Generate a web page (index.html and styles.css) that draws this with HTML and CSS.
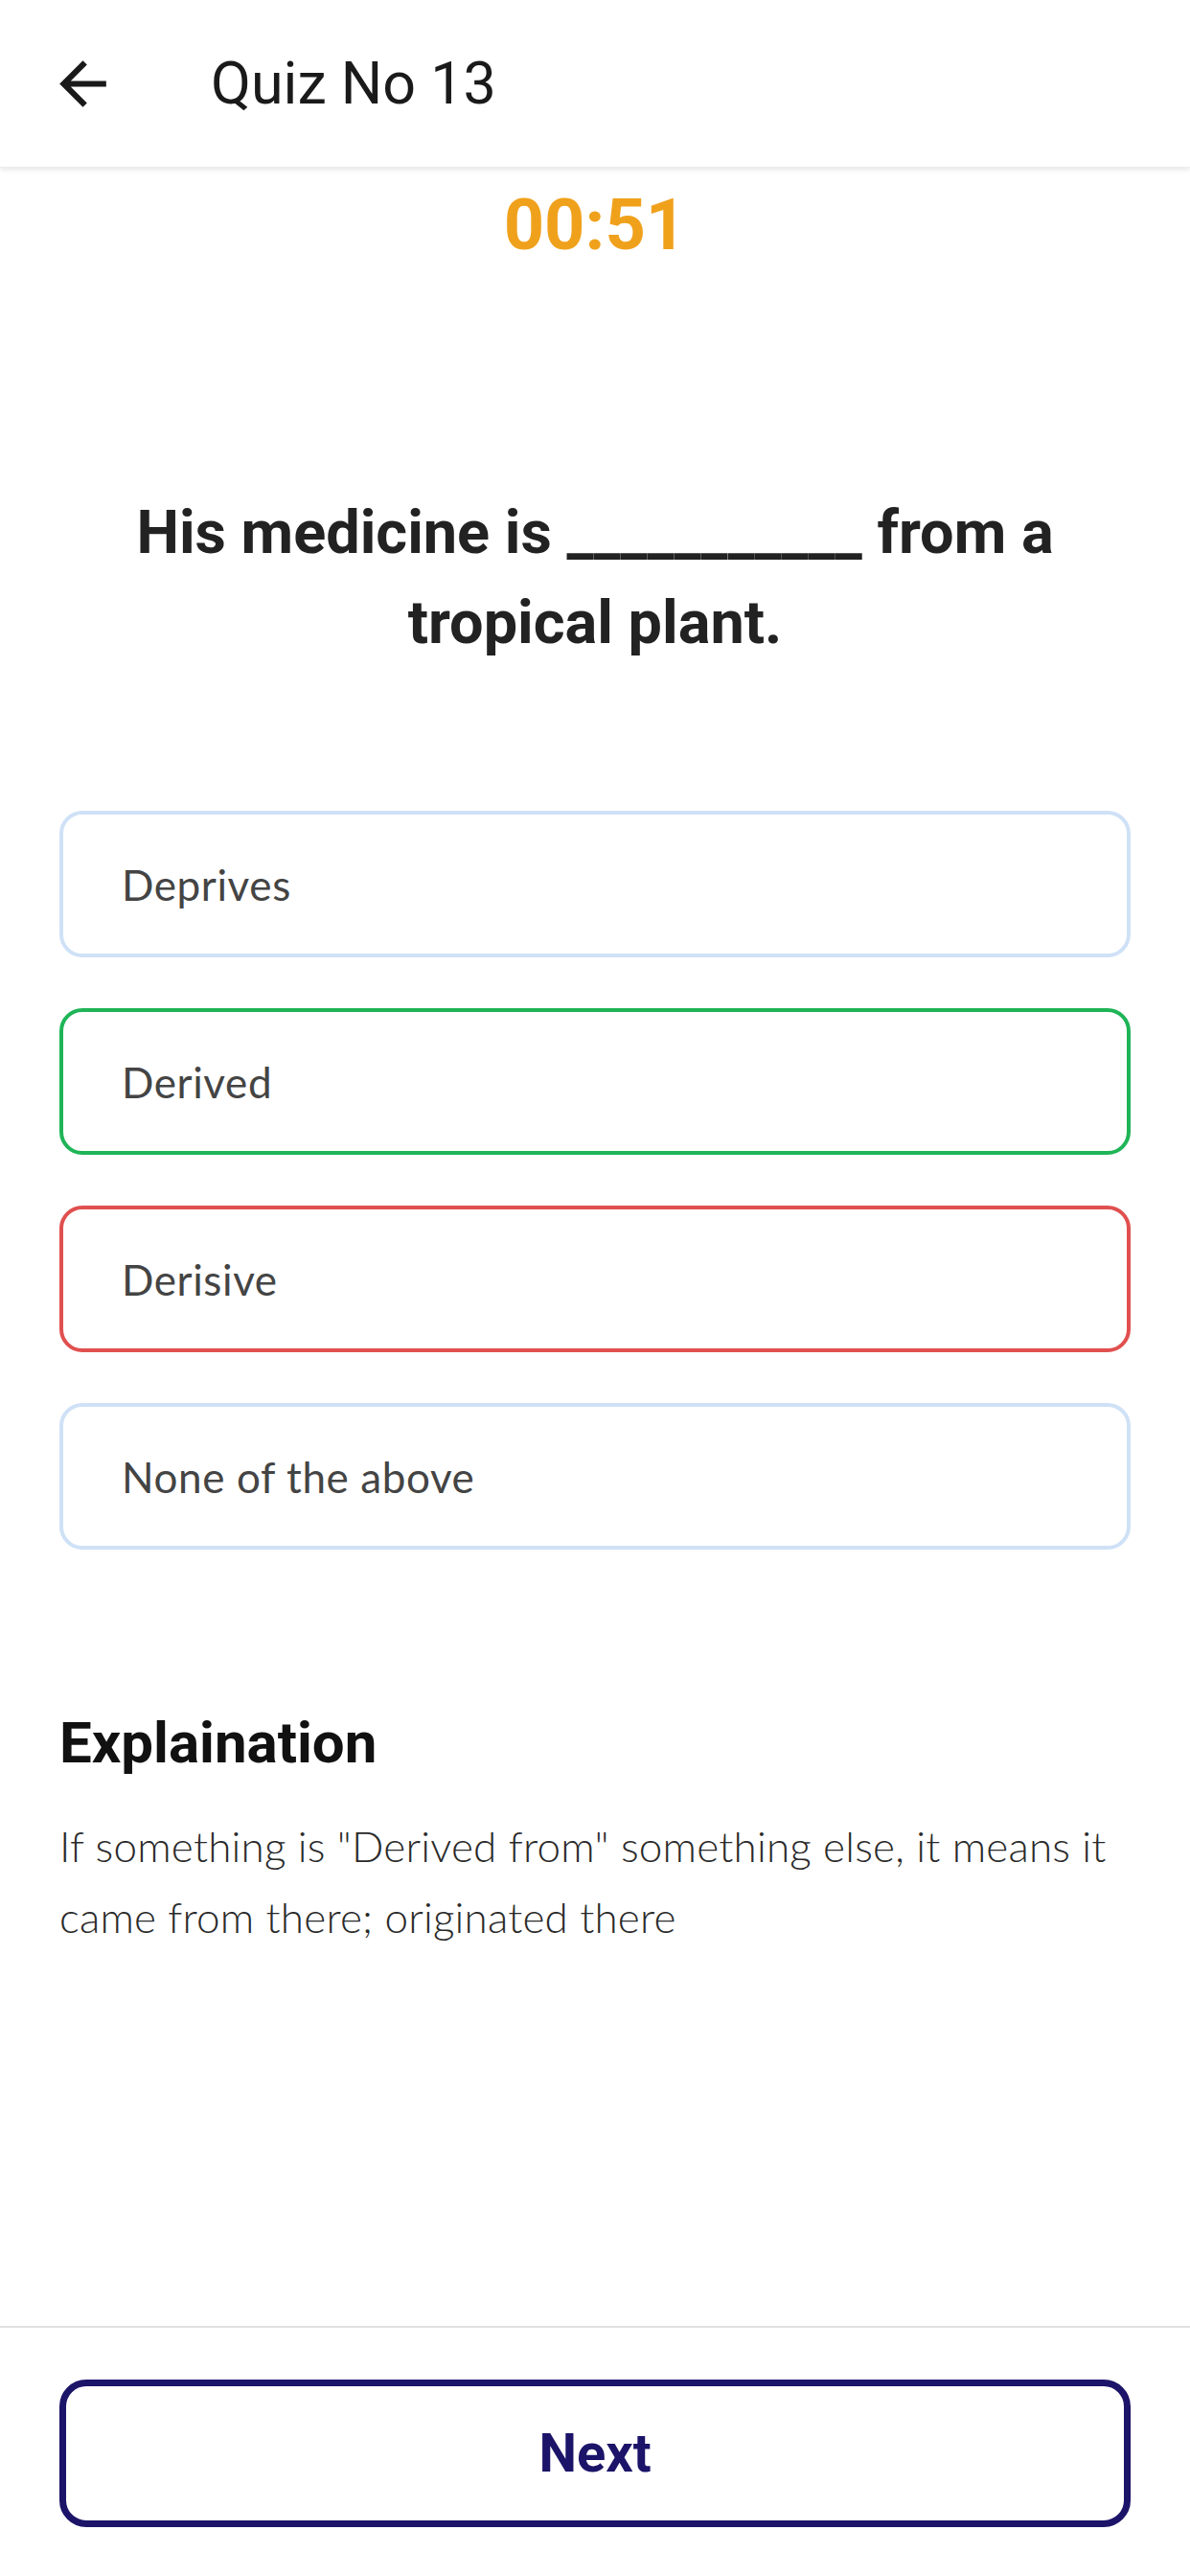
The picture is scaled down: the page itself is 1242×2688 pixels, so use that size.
FILE: index.html
```html
<!DOCTYPE html>
<html lang="en">
<head>
  <meta charset="UTF-8" />
  <meta name="viewport" content="width=device-width, initial-scale=1.0" />
  <title>Quiz No 13</title>
  <link rel="stylesheet" href="styles.css">
</head>
<body>
  <div class="page">
    <header class="topbar">
      <svg class="back" viewBox="0 0 24 24"><path d="M20 11H7.830l5.590-5.590L12 4l-8 8 8 8 1.410-1.410L7.830 13H20v-2z"/></svg>
      <h1 class="title">Quiz No 13</h1>
    </header>

    <main class="content">
      <div class="timer">00:51</div>
      <p class="question">His medicine is ___________ from a tropical plant.</p>

      <div class="options">
        <div class="option">Deprives</div>
        <div class="option correct">Derived</div>
        <div class="option wrong">Derisive</div>
        <div class="option">None of the above</div>
      </div>

      <h2 class="explain-title">Explaination</h2>
      <p class="explain-text">If something is "Derived from" something else, it means it came from there; originated there</p>
    </main>

    <footer class="footer">
      <button class="next">Next</button>
    </footer>
  </div>
</body>
</html>
```

FILE: styles.css
```css
* {
  box-sizing: border-box;
}
body {
  margin: 0;
  background: #fff;
  font-family: 'Roboto', sans-serif;
  color: #1a1a1a;
}
.page {
  min-height: 2688px;
  display: flex;
  flex-direction: column;
}
.topbar {
  height: 175px;
  display: flex;
  align-items: center;
  padding-left: 50px;
  gap: 97px;
  box-shadow: 0 2px 5px rgba(0, 0, 0, 0.1);
  border-bottom: 1px solid #ececec;
}
.back {
  width: 73px;
  height: 73px;
  fill: #1a1a1a;
}
.title {
  margin: 0;
  font-size: 61px;
  font-weight: 400;
  line-height: 1;
}
.content {
  padding: 0 62px;
}
.timer {
  margin-top: 23px;
  text-align: center;
  font-size: 74px;
  font-weight: 700;
  line-height: 1;
  color: #f0a11c;
}
.question {
  margin: 237px 0 0;
  text-align: center;
  font-size: 63px;
  font-weight: 700;
  line-height: 94px;
  color: #222;
  padding: 0 20px;
}
.options {
  margin-top: 149px;
  display: flex;
  flex-direction: column;
  gap: 53px;
}
.option {
  height: 153px;
  border: 4px solid #cfe1f6;
  border-radius: 24px;
  padding-left: 61px;
  display: flex;
  align-items: center;
  font-family: 'Lato', sans-serif;
  font-size: 44px;
  letter-spacing: 0.6px;
  color: #444;
}
.option.correct {
  border-color: #1fb457;
}
.option.wrong {
  border-color: #e0504f;
}
.explain-title {
  margin: 172px 0 0;
  font-size: 60px;
  font-weight: 700;
  line-height: 1;
  color: #111;
}
.explain-text {
  margin: 40px 0 0;
  font-family: 'Lato', sans-serif;
  font-weight: 300;
  font-size: 44px;
  letter-spacing: 0.2px;
  line-height: 74px;
  color: #2a2a2a;
}
.footer {
  margin-top: auto;
  border-top: 2px solid #e0e0e0;
  padding: 54px 62px 51px;
}
.next {
  width: 100%;
  height: 154px;
  background: #fff;
  border: 7px solid #1b1468;
  border-radius: 28px;
  font-family: 'Roboto', sans-serif;
  font-size: 56px;
  font-weight: 700;
  color: #1b1468;
}
```
